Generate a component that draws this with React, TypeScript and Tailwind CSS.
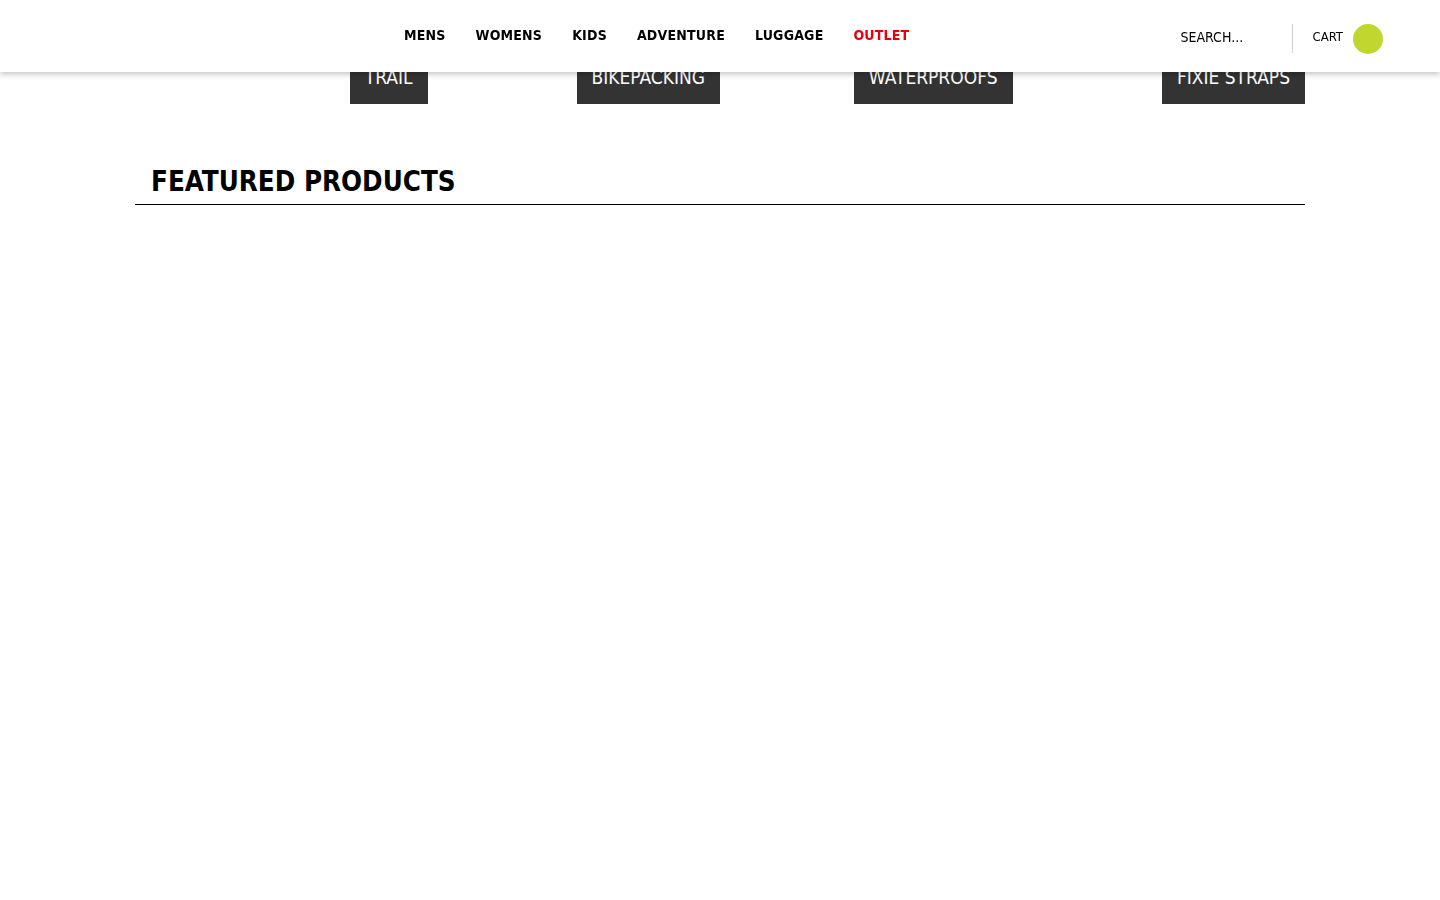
const navItems = ["MENS", "WOMENS", "KIDS", "ADVENTURE", "LUGGAGE", "OUTLET"];
const categories = ["TRAIL", "BIKEPACKING", "WATERPROOFS", "FIXIE STRAPS"];

const font = { fontFamily: "Tahoma, 'DejaVu Sans Condensed', 'DejaVu Sans', sans-serif" };

export default function App() {
  return (
    <div className="min-h-[900px] bg-white text-black" style={font}>
      <header className="fixed inset-x-0 top-0 z-10 flex h-[72px] items-center bg-white shadow-[0_2px_6px_rgba(0,0,0,0.25)]">
        <nav className="ml-[404px] flex items-center gap-[30px] pb-[2px]">
          {navItems.map((item) => (
            <a
              key={item}
              href="#"
              className={
                "text-[14px] font-bold tracking-[0.2px] " +
                (item === "OUTLET" ? "text-[#e8000b]" : "text-black")
              }
            >
              {item}
            </a>
          ))}
        </nav>
        <div className="ml-auto flex items-center pr-[57px] pt-[2px]">
          <input
            type="text"
            placeholder="SEARCH..."
            className="w-[111px] bg-transparent text-[14px] outline-none placeholder:text-black"
          />
          <div className="mt-[2px] h-[29px] w-px bg-[#cfcfcf]" />
          <span className="ml-[20px] text-[13px]">CART</span>
          <span className="ml-[10px] mt-[4px] h-[30px] w-[30px] rounded-full bg-[#c1d72f]" />
        </div>
      </header>

      <main className="mx-auto w-[1170px] pt-[50px]">
        <div className="grid grid-cols-4">
          {categories.map((c) => (
            <div key={c} className="flex justify-end">
              <a href="#" className="bg-[#333333] px-[15px] py-[14px] text-[19px] leading-[26px] text-white">
                {c}
              </a>
            </div>
          ))}
        </div>
        <h2 className="mt-[60px] border-b border-black px-[16px] pb-[6px] text-[27.5px] font-bold leading-[34px]">
          FEATURED PRODUCTS
        </h2>
      </main>
    </div>
  );
}
